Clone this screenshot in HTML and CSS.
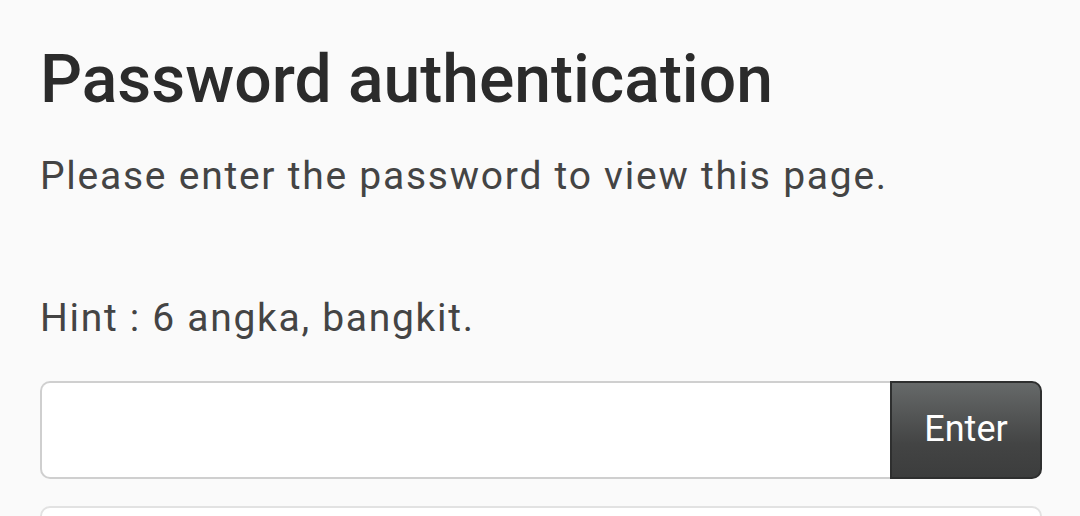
FILE: index.html
```html
<!DOCTYPE html>
<html lang="en">
<head>
<meta charset="utf-8">
<title>Password authentication</title>
<link rel="stylesheet" href="styles.css">
</head>
<body>
<main class="page">
  <h1 class="title">Password authentication</h1>
  <p class="lead">Please enter the password to view this page.</p>
  <p class="hint">Hint : 6 angka, bangkit.</p>
  <form class="form">
    <input class="field" type="password" aria-label="Password">
    <button class="btn" type="button">Enter</button>
  </form>
  <div class="next-box"></div>
</main>
</body>
</html>
```
FILE: styles.css
```css
html, body {
  margin: 0;
  padding: 0;
  background: #fafafa;
}
body {
  font-family: Roboto, "Noto Sans", sans-serif;
  overflow: hidden;
  height: 516px;
}
.page {
  width: 1002px;
  margin-left: 40px;
  padding-top: 40px;
}
.title {
  margin: 0;
  font-size: 66px;
  font-weight: 500;
  letter-spacing: 0;
  line-height: 80px;
  color: #2b2b2b;
}
.lead {
  margin: 0;
  margin-top: 32px;
  font-size: 39px;
  letter-spacing: 1.75px;
  line-height: 48px;
  color: #444;
}
.hint {
  margin: 0;
  margin-top: 94px;
  font-size: 39px;
  letter-spacing: 1.7px;
  line-height: 48px;
  color: #444;
}
.form {
  display: flex;
  margin-top: 39px;
  height: 98px;
}
.field {
  flex: 1;
  box-sizing: border-box;
  height: 98px;
  margin: 0;
  border: 2px solid #cfcfcf;
  border-right: none;
  border-radius: 10px 0 0 10px;
  background: #fff;
  outline: none;
}
.btn {
  box-sizing: border-box;
  width: 152px;
  height: 98px;
  margin: 0;
  border: 2px solid #2e2f2f;
  border-radius: 0 10px 10px 0;
  background: linear-gradient(#666969, #434444 65%, #3c3d3d);
  color: #fff;
  font-family: Roboto, "Noto Sans", sans-serif;
  font-size: 36px;
  padding: 0 0 2px;
}
.next-box {
  margin-top: 27px;
  height: 60px;
  box-sizing: border-box;
  border: 2px solid #e2e2e2;
  border-radius: 10px;
  background: #fff;
}
```
